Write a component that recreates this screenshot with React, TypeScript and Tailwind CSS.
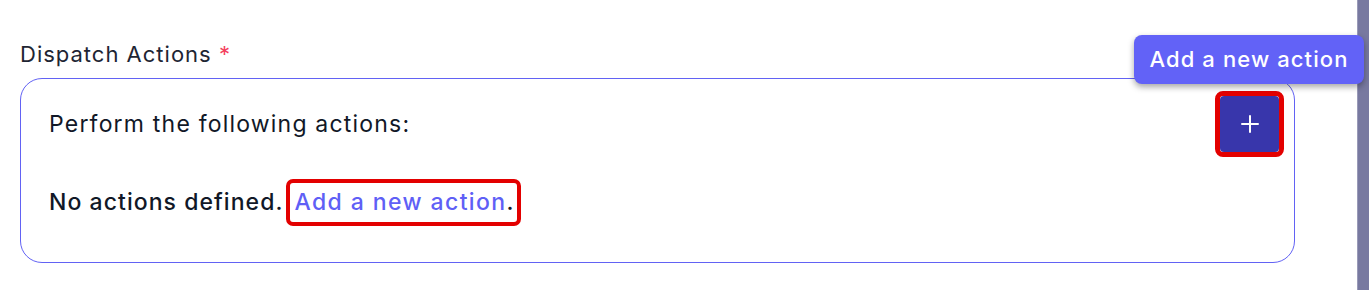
import React from "react";

export default function App() {
  return (
    <div className="relative w-[1369px] h-[290px] overflow-hidden bg-white flex" style={{ fontFamily: "Inter, 'Noto Sans', sans-serif" }}>
      <div className="flex-1 pt-[38px] pl-[20px]">
        <div className="h-[32px] leading-[32px] text-[22px] text-[#1e2533] tracking-[1px] mb-[8px]">
          Dispatch Actions <span className="text-[#f43f5e]">*</span>
        </div>
        <div className="w-[1275px] h-[185px] border border-[#6262f4] rounded-[22px] pt-[12px]">
          <div className="flex items-center justify-between pl-[28px] pr-[10px]">
            <div className="h-[32px] leading-[32px] text-[23px] text-[#111827] tracking-[1.2px]">Perform the following actions:</div>
            <span className="inline-flex border-[5px] border-[#e30000] rounded-[8px]">
              <button className="w-[59px] h-[56px] bg-[#3836ab] rounded-[4px] flex items-center justify-center">
                <svg width="20" height="20" viewBox="0 0 20 20" fill="none" stroke="white" strokeWidth="2" strokeLinecap="round">
                  <path d="M10 2v16M2 10h16" />
                </svg>
              </button>
            </span>
          </div>
          <div className="mt-[22px] pl-[28px] flex items-center h-[47px] text-[23px] font-medium text-[#111827]">
            <span className="tracking-[1.05px]">No actions defined.</span>
            <span className="ml-[3px] border-4 border-[#e30000] rounded-[7px] pl-[4px] pr-[3px] h-[47px] flex items-center">
              <span className="text-[#5f5ff6] tracking-[1.4px]">Add a new action</span>
              <span>.</span>
            </span>
          </div>
        </div>
      </div>
      <div className="w-[12px] h-full bg-[#7879a0] border-l border-[#9a9ab8]"></div>
      <div className="absolute left-[1134px] top-[35px] w-[230px] h-[49px] rounded-[8px] bg-[#6262f7] shadow-[0_3px_6px_rgba(0,0,0,0.35)] flex items-center justify-center text-white text-[22px] font-medium tracking-[1.1px]">
        Add a new action
      </div>
    </div>
  );
}
